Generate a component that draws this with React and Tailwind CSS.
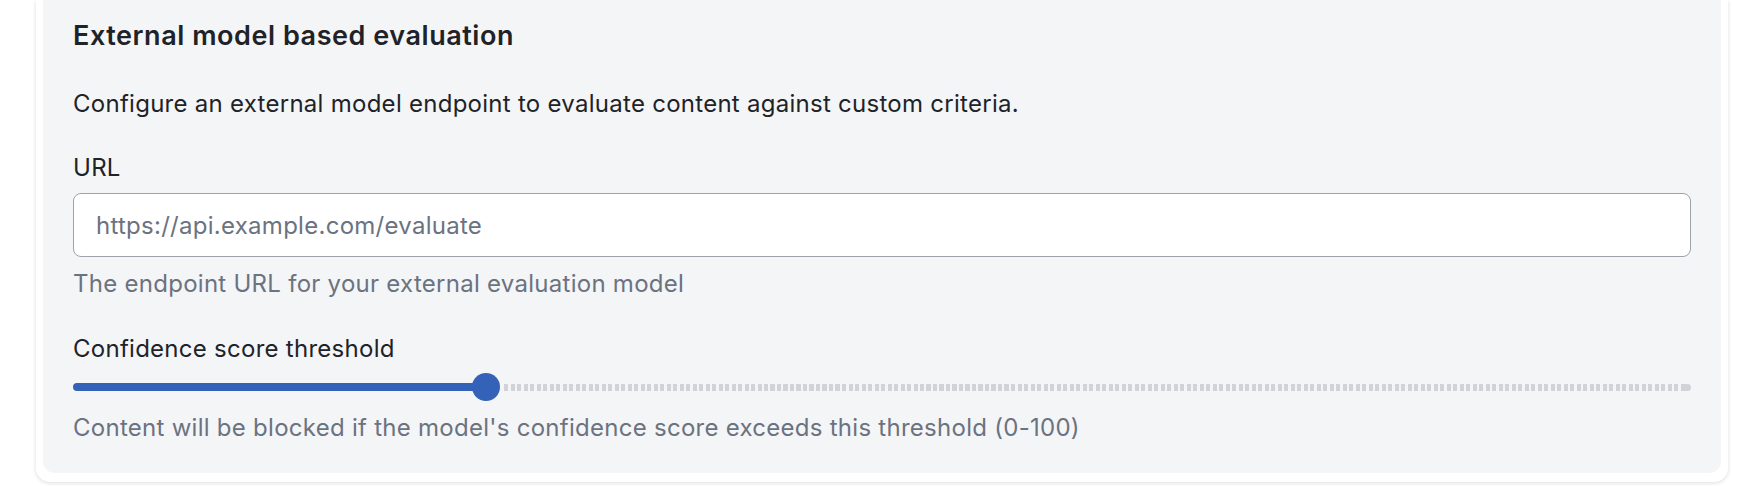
export default function App() {
  return (
    <div className="w-[1762px] h-[486px] bg-white overflow-hidden" style={{ fontFamily: "Inter, 'Noto Sans', sans-serif" }}>
      <div className="ml-[36px] w-[1692px] bg-white rounded-b-[14px] px-[7px] pb-[9px] shadow-[0_1px_4px_rgba(0,0,0,0.14)]">
        <div className="bg-[#f4f5f7] rounded-b-[12px] px-[30px] pt-[18px] pb-[27px] flex flex-col">
          <h2 className="text-[27px] leading-[36px] font-semibold tracking-[0.55px] text-[#1f2328]">External model based evaluation</h2>
          <p className="mt-[32px] text-[24px] leading-[36px] tracking-[0.27px] text-[#1f2328]">
            Configure an external model endpoint to evaluate content against custom criteria.
          </p>
          <label className="mt-[28px] text-[24px] leading-[36px] tracking-[0.27px] text-[#1f2328]">URL</label>
          <input
            type="text"
            placeholder="https://api.example.com/evaluate"
            className="mt-[7px] h-[64px] w-full rounded-[8px] border border-[#9ea3ab] bg-white px-[22px] text-[24px] tracking-[0.27px] text-[#1f2328] placeholder:text-[#6b7280] outline-none"
            style={{ fontFamily: "Inter, 'Noto Sans', sans-serif" }}
          />
          <p className="mt-[9px] text-[24px] leading-[36px] tracking-[0.27px] text-[#6b7280]">The endpoint URL for your external evaluation model</p>
          <label className="mt-[29px] text-[24px] leading-[36px] tracking-[0.27px] text-[#1f2328]">Confidence score threshold</label>
          <div className="mt-[6px] h-[28px] flex items-center">
            <div className="w-[413px] h-[8px] rounded-full bg-[#3462b9]" />
            <div className="-ml-[14px] w-[28px] h-[28px] rounded-full bg-[#3462b9] shrink-0" />
            <div className="ml-[4px] flex-1 flex h-[7px]">
              <div className="flex-1 h-full bg-[repeating-linear-gradient(90deg,#d1d3d8_0px,#d1d3d8_4px,transparent_4px,transparent_6.5px)]" />
              <div className="w-[8px] h-full rounded-r-full bg-[#d1d3d8]" />
            </div>
          </div>
          <p className="mt-[9px] text-[24px] leading-[36px] tracking-[0.27px] text-[#6b7280]">
            Content will be blocked if the model's confidence score exceeds this threshold (0-100)
          </p>
        </div>
      </div>
    </div>
  );
}
